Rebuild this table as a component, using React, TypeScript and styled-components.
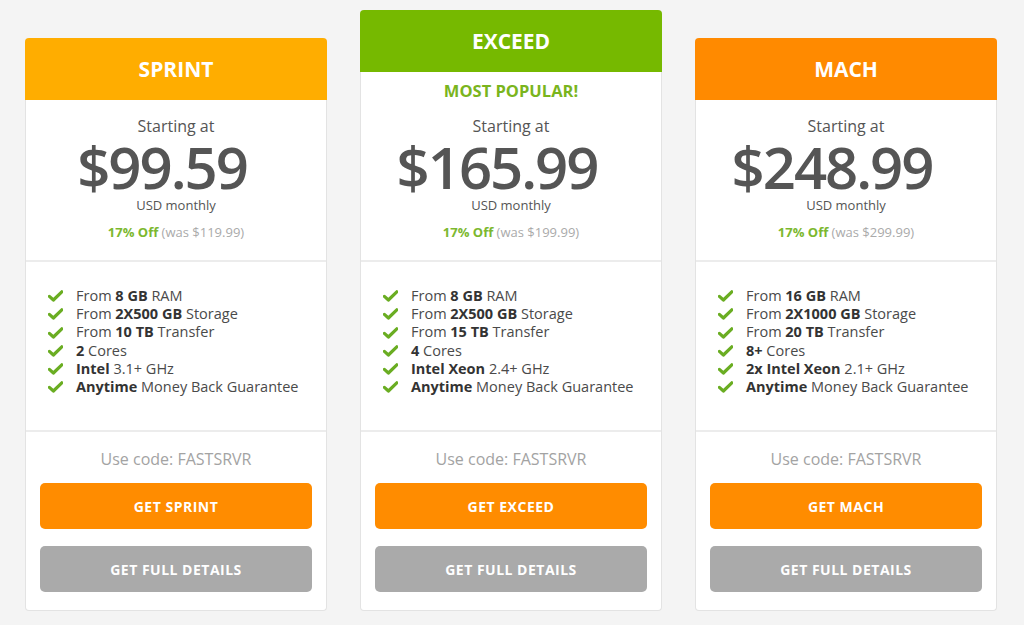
import React from "react";
import styled, { createGlobalStyle } from "styled-components";

const Global = createGlobalStyle`
  html, body { margin: 0; padding: 0; background: #f4f4f4; }
  body { font-family: "Open Sans", "Liberation Sans", sans-serif; }
  * { box-sizing: border-box; }
`;

const Page = styled.div`
  width: 1024px;
  height: 625px;
  display: flex;
  align-items: flex-end;
  gap: 33px;
  padding: 0 0 14px 25px;
`;

const Card = styled.div`
  width: 302px;
  display: flex;
  flex-direction: column;
  background: #fff;
  border: 1px solid #e3e3e3;
  border-top: none;
  border-radius: 4px;
`;

const Header = styled.div<{ $bg: string }>`
  height: 62px;
  margin: 0 -1px;
  background: ${(p) => p.$bg};
  border-radius: 4px 4px 0 0;
  color: #fff;
  font-weight: 700;
  font-size: 21px;
  display: flex;
  align-items: center;
  justify-content: center;
`;

const Popular = styled.div`
  height: 28px;
  padding-top: 8px;
  text-align: center;
  color: #7ab51d;
  font-weight: 700;
  font-size: 16.5px;
  line-height: 22px;
`;

const PriceBlock = styled.div`
  height: 162px;
  display: flex;
  flex-direction: column;
  align-items: center;
  padding-top: 15px;
  border-bottom: 2px solid #ececec;
`;

const Starting = styled.div`
  font-size: 16px;
  line-height: 22px;
  color: #555;
`;

const Price = styled.div`
  margin: 2px 28px 1px 0;
  font-size: 58px;
  line-height: 56px;
  font-weight: 600;
  letter-spacing: -2px;
  color: #555;
`;

const Usd = styled.div`
  font-size: 13px;
  line-height: 18px;
  color: #555;
`;

const Discount = styled.div`
  margin-top: 10px;
  font-size: 13px;
  line-height: 16px;
  color: #aaa;
  b { color: #7cb82f; font-weight: 700; }
`;

const Features = styled.ul`
  height: 170px;
  margin: 0;
  list-style: none;
  padding: 25px 0 0 22px;
  border-bottom: 2px solid #ececec;
`;

const Feature = styled.li`
  display: flex;
  align-items: center;
  gap: 13px;
  font-size: 14.5px;
  line-height: 18.2px;
  color: #4a4a4a;
  b { color: #333; font-weight: 700; }
`;

const Footer = styled.div`
  display: flex;
  flex-direction: column;
  align-items: center;
  padding: 16px 14px 18px;
`;

const Code = styled.div`
  font-size: 16px;
  line-height: 22px;
  color: #a3a3a3;
  margin-bottom: 13px;
`;

const Button = styled.div<{ $bg: string }>`
  width: 100%;
  height: 46px;
  border-radius: 5px;
  background: ${(p) => p.$bg};
  color: #fff;
  font-weight: 700;
  font-size: 14px;
  letter-spacing: 0.5px;
  display: flex;
  align-items: center;
  justify-content: center;
  & + & { margin-top: 17px; }
`;

const Check = () => (
  <svg width="15" height="12" viewBox="0 0 15 12">
    <path d="M1.4 6.4 L5.4 10 L13.8 1.8" fill="none" stroke="#6aad22" strokeWidth="3.2" strokeLinecap="round" strokeLinejoin="round" />
  </svg>
);

type Plan = {
  name: string;
  color: string;
  popular?: boolean;
  price: string;
  was: string;
  features: [string, string, string][];
};

const plans: Plan[] = [
  {
    name: "SPRINT",
    color: "#ffad00",
    price: "$99.59",
    was: "$119.99",
    features: [
      ["From ", "8 GB", " RAM"],
      ["From ", "2X500 GB", " Storage"],
      ["From ", "10 TB", " Transfer"],
      ["", "2", " Cores"],
      ["", "Intel", " 3.1+ GHz"],
      ["", "Anytime", " Money Back Guarantee"],
    ],
  },
  {
    name: "EXCEED",
    color: "#76b900",
    popular: true,
    price: "$165.99",
    was: "$199.99",
    features: [
      ["From ", "8 GB", " RAM"],
      ["From ", "2X500 GB", " Storage"],
      ["From ", "15 TB", " Transfer"],
      ["", "4", " Cores"],
      ["", "Intel Xeon", " 2.4+ GHz"],
      ["", "Anytime", " Money Back Guarantee"],
    ],
  },
  {
    name: "MACH",
    color: "#ff8a00",
    price: "$248.99",
    was: "$299.99",
    features: [
      ["From ", "16 GB", " RAM"],
      ["From ", "2X1000 GB", " Storage"],
      ["From ", "20 TB", " Transfer"],
      ["", "8+", " Cores"],
      ["", "2x Intel Xeon", " 2.1+ GHz"],
      ["", "Anytime", " Money Back Guarantee"],
    ],
  },
];

export default function App() {
  return (
    <>
      <Global />
      <Page>
        {plans.map((p) => (
          <Card key={p.name}>
            <Header $bg={p.color}>{p.name}</Header>
            {p.popular && <Popular>MOST POPULAR!</Popular>}
            <PriceBlock>
              <Starting>Starting at</Starting>
              <Price>{p.price}</Price>
              <Usd>USD monthly</Usd>
              <Discount>
                <b>17% Off</b> (was {p.was})
              </Discount>
            </PriceBlock>
            <Features>
              {p.features.map((f, i) => (
                <Feature key={i}>
                  <Check />
                  <span>
                    {f[0]}
                    <b>{f[1]}</b>
                    {f[2]}
                  </span>
                </Feature>
              ))}
            </Features>
            <Footer>
              <Code>Use code: FASTSRVR</Code>
              <Button $bg="#ff8c00">GET {p.name}</Button>
              <Button $bg="#aaaaaa">GET FULL DETAILS</Button>
            </Footer>
          </Card>
        ))}
      </Page>
    </>
  );
}
